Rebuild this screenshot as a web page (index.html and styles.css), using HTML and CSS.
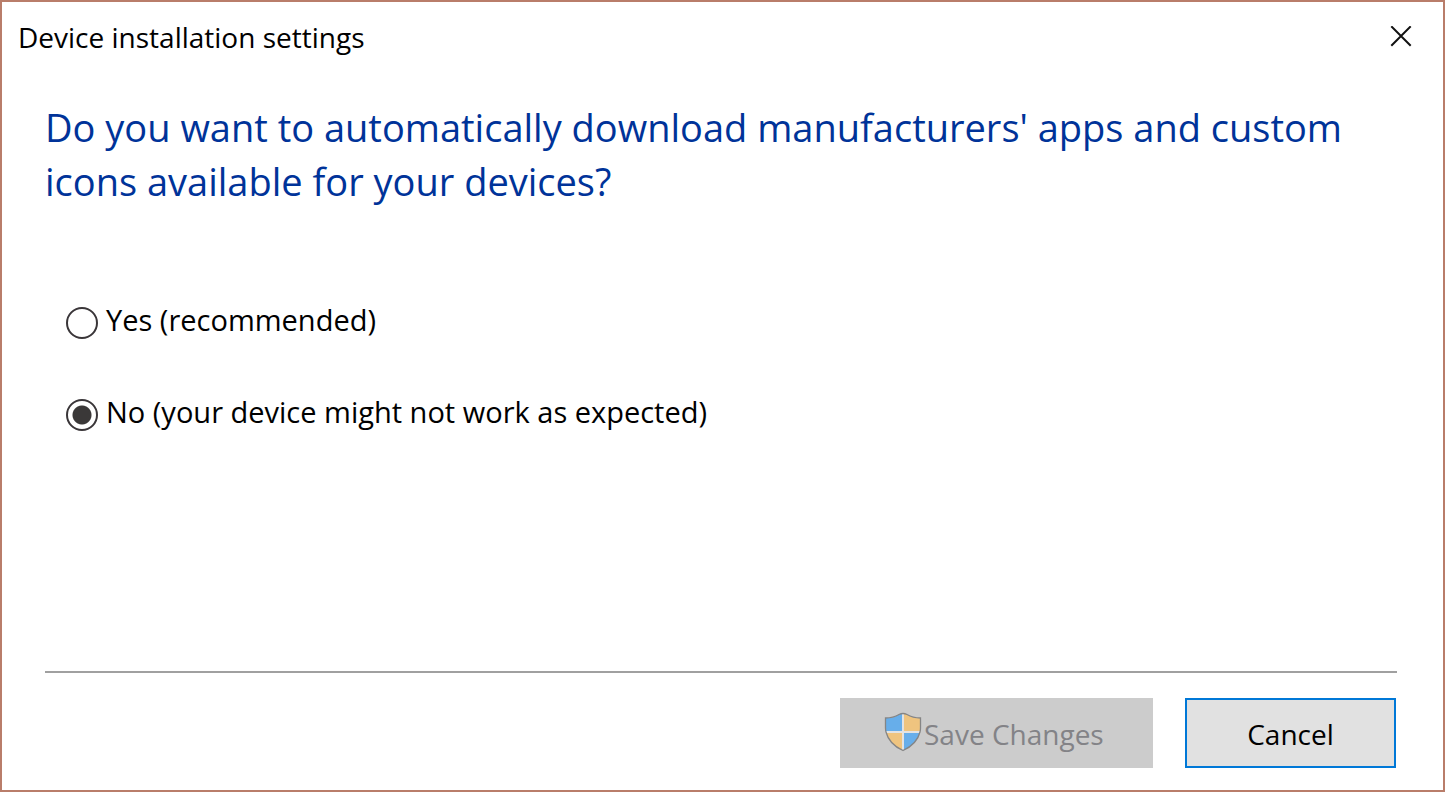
FILE: index.html
```html
<!DOCTYPE html>
<html lang="en">
<head>
<meta charset="UTF-8">
<meta name="viewport" content="width=device-width, initial-scale=1.0">
<title>Device installation settings</title>
<link rel="stylesheet" href="styles.css">
</head>
<body>

<form class="dialog">
    <header class="titlebar">
        <span class="title">Device installation settings</span>
        <button type="button" class="close" aria-label="Close">
            <svg width="22" height="22" viewBox="0 0 22 22">
                <path d="M1.3 0.3 L20.7 19.7 M20.7 0.3 L1.3 19.7" stroke="#111" stroke-width="2" fill="none"/>
            </svg>
        </button>
    </header>

    <main class="content">
        <h1>Do you want to automatically download manufacturers' apps and custom icons available for your devices?</h1>

        <div class="options">
            <div class="option">
                <input type="radio" id="yes" name="download">
                <label for="yes">Yes (recommended)</label>
            </div>
            <div class="option">
                <input type="radio" id="no" name="download" checked>
                <label for="no">No (your device might not work as expected)</label>
            </div>
        </div>
    </main>

    <footer class="footer">
        <button type="submit" class="btn save" disabled>
            <svg class="shield" width="38" height="40" viewBox="0 0 38 40">
                <path d="M19 1.500 Q17 1.500 15 2.500 C10 5.500 7 6 1.500 6 V16 Q1.500 18 2 20 H19Z" fill="#67aeea"/>
                <path d="M19 1.500 Q21 1.500 23 2.500 C28 5.500 31 6 36.500 6 V16 Q36.500 18 36 20 H19Z" fill="#efc47f"/>
                <path d="M2 20 C4 28 9 34 19 38.500 V20Z" fill="#efc47f"/>
                <path d="M36 20 C34 28 29 34 19 38.500 V20Z" fill="#67aeea"/>
                <path d="M19 2 V38 M2 20 H36" stroke="#e3e3e3" stroke-width="2" fill="none"/>
                <path d="M19 1.500 Q17 1.500 15 2.500 C10 5.500 7 6 1.500 6 V16 Q1.500 18 2 20 C4 28 9 34 19 38.500 C29 34 34 28 36 20 Q36.500 18 36.500 16 V6 C31 6 28 5.500 23 2.500 Q21 1.500 19 1.500Z" stroke="#858585" stroke-width="1.300" fill="none"/>
            </svg>
            <span>Save Changes</span>
        </button>
        <button type="button" class="btn cancel">Cancel</button>
    </footer>
</form>

</body>
</html>
```
FILE: styles.css
```css
* {
    box-sizing: border-box;
}

body {
    margin: 0;
    font-family: "Open Sans", "Noto Sans", sans-serif;
    font-size: 28px;
    color: #000;
    background-color: #fff;
}

.dialog {
    display: flex;
    flex-direction: column;
    min-height: 100vh;
    border: 2px solid #b97d6a;
}

.titlebar {
    display: flex;
    align-items: center;
    justify-content: space-between;
    height: 70px;
    padding: 0 21px 0 16px;
}

.close {
    display: flex;
    padding: 10px;
    border: none;
    background: none;
}

.content {
    flex: 1;
    padding: 28px 43px 0;
}

h1 {
    margin: 0;
    font-size: 38px;
    font-weight: normal;
    line-height: 54px;
    color: #003399;
}

.options {
    display: flex;
    flex-direction: column;
    gap: 54px;
    padding: 93px 21px 0;
}

.option {
    display: flex;
    align-items: flex-end;
    gap: 8px;
    font-size: 29px;
    line-height: 38px;
}

.option input {
    appearance: none;
    flex: none;
    width: 32px;
    height: 32px;
    margin: 0;
    border: 2px solid #3a3639;
    border-radius: 50%;
}

.option input:checked {
    background: radial-gradient(circle, #3a3838 9px, #fff 10px);
}

.footer {
    display: flex;
    justify-content: flex-end;
    gap: 32px;
    margin: 0 46px 0 43px;
    padding: 25px 1px 22px 0;
    border-top: 2px solid #a0a0a0;
}

.btn {
    display: flex;
    align-items: center;
    justify-content: center;
    height: 70px;
    padding: 2px 44px 0;
    border: none;
    font-family: inherit;
    font-size: 28px;
}

.save {
    justify-content: flex-start;
    gap: 2px;
    min-width: 313px;
    background-color: #ccc;
    color: #838387;
}

.shield {
    margin-bottom: 4px;
}

.cancel {
    min-width: 211px;
    border: 2px solid #0078d7;
    background-color: #e1e1e1;
    color: #000;
}
```
